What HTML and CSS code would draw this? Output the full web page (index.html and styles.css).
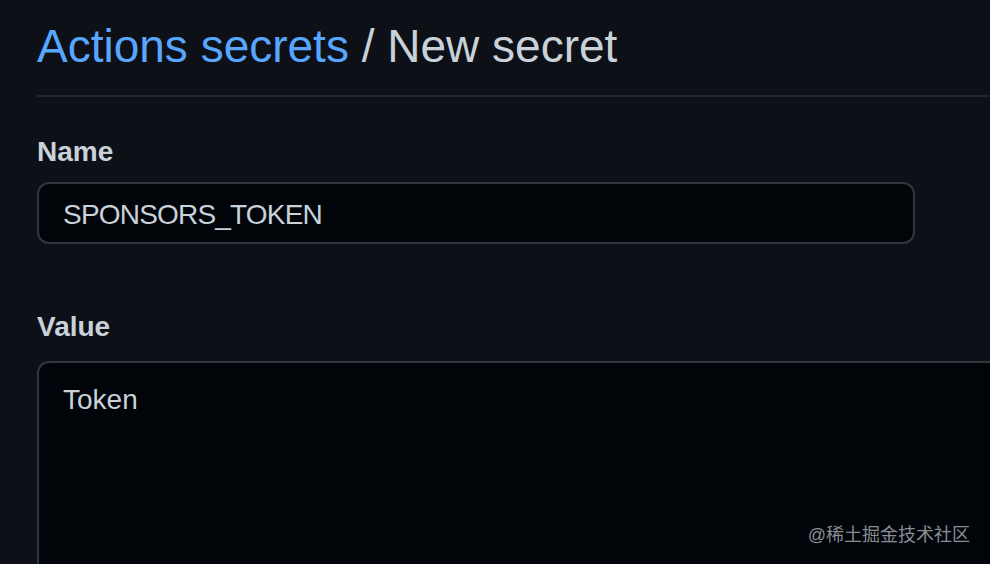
FILE: index.html
```html
<!DOCTYPE html>
<html lang="en">
<head>
<meta charset="utf-8">
<title>Actions secrets / New secret</title>
<link rel="stylesheet" href="styles.css">
</head>
<body>
<main class="page">
  <h1 class="title"><a class="title-link" href="#">Actions secrets</a> <span class="title-sep">/</span> New secret</h1>
  <form class="form">
    <label class="label label-name" for="name">Name</label>
    <input class="input" id="name" type="text" value="SPONSORS_TOKEN">
    <label class="label label-value" for="value">Value</label>
    <textarea class="textarea" id="value">Token</textarea>
  </form>
</main>
<div class="watermark">@稀土掘金技术社区</div>
</body>
</html>
```
FILE: styles.css
```css
html, body {
  margin: 0;
  padding: 0;
  height: 100%;
  overflow: hidden;
  background: #0d1117;
}
body {
  font-family: "Liberation Sans", Arial, sans-serif;
  color: #c9d1d9;
  position: relative;
}
.page {
  box-sizing: border-box;
  height: 100%;
  padding: 16px 0 0 37px;
  display: flex;
  flex-direction: column;
}
.title {
  margin: 0;
  font-size: 46px;
  line-height: 60px;
  font-weight: 400;
  color: #c9d1d9;
  padding-bottom: 19px;
  border-bottom: 2px solid #21262d;
  white-space: nowrap;
}
.title-link {
  color: #58a6ff;
  text-decoration: none;
}
.title-sep {
  color: #c9d1d9;
}
.form {
  flex: 1;
  min-height: 0;
  display: flex;
  flex-direction: column;
  align-items: flex-start;
}
.label {
  font-size: 28px;
  line-height: 40px;
  font-weight: 700;
  color: #c9d1d9;
}
.label-name {
  margin-top: 35px;
  margin-bottom: 10px;
}
.label-value {
  margin-top: 63px;
  margin-bottom: 14px;
}
.input {
  box-sizing: border-box;
  width: 878px;
  height: 62px;
  margin: 0;
  padding: 3px 24px 0;
  border: 2px solid #30363d;
  border-radius: 12px;
  background: #010409;
  color: #c9d1d9;
  font-family: "Liberation Sans", Arial, sans-serif;
  font-size: 28px;
  letter-spacing: -0.8px;
  outline: none;
}
.textarea {
  box-sizing: border-box;
  flex: 1;
  align-self: stretch;
  margin: 0;
  padding: 16px 24px;
  border: 2px solid #30363d;
  border-right: none;
  border-bottom: none;
  border-radius: 12px 0 0 0;
  background: #010409;
  color: #c9d1d9;
  font-family: "Liberation Sans", Arial, sans-serif;
  font-size: 28px;
  line-height: 42px;
  resize: none;
  outline: none;
  overflow: hidden;
}
.watermark {
  position: absolute;
  right: 20px;
  bottom: 17px;
  font-family: "Liberation Sans", "Noto Sans CJK SC", sans-serif;
  font-size: 18px;
  line-height: 24px;
  color: #8a8d93;
  white-space: nowrap;
}
```
